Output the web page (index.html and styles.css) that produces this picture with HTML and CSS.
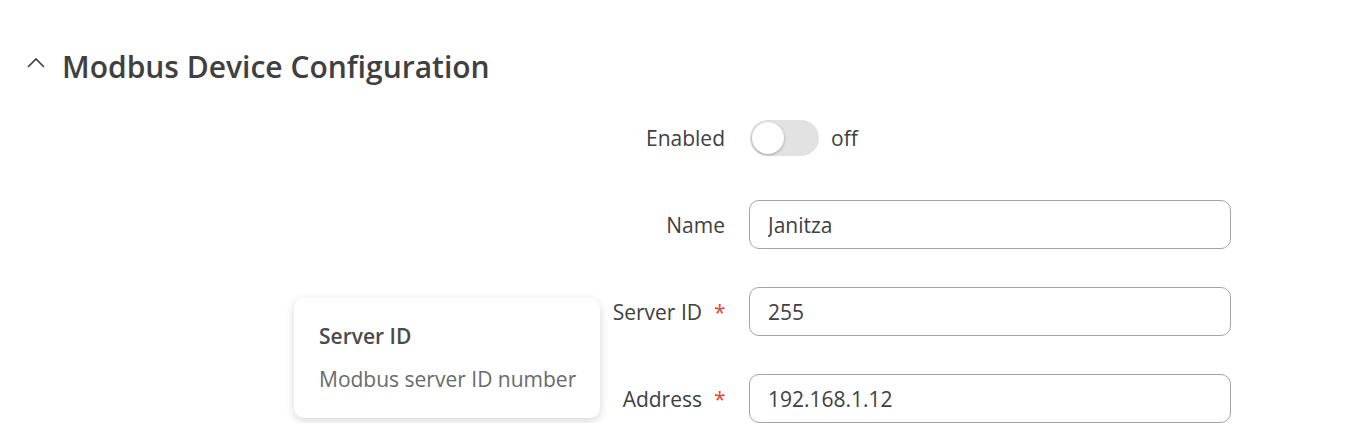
FILE: index.html
```html
<!DOCTYPE html>
<html lang="en">
<head>
    <meta charset="UTF-8">
    <meta name="viewport" content="width=device-width, initial-scale=1.0">
    <title>Modbus Device Configuration</title>
    <link rel="stylesheet" href="styles.css">
</head>
<body>
    <div class="section">
        <div class="section-header">
            <svg class="chevron" width="20" height="12" viewBox="0 0 20 12">
                <path d="M2 10 L10 2 L18 10" fill="none" stroke="#404040" stroke-width="1.6"/>
            </svg>
            <h2>Modbus Device Configuration</h2>
        </div>
        <div class="form">
            <div class="label">Enabled</div>
            <div class="field">
                <span class="toggle"><span class="knob"></span></span>
                <span class="toggle-text">off</span>
            </div>

            <div class="label">Name</div>
            <div class="field"><input type="text" value="Janitza"></div>

            <div class="label">Server ID <span class="req">*</span></div>
            <div class="field"><input type="text" value="255"></div>

            <div class="label">Address <span class="req">*</span></div>
            <div class="field"><input type="text" value="192.168.1.12"></div>
        </div>
        <div class="tooltip">
            <div class="tooltip-title">Server ID</div>
            <div class="tooltip-text">Modbus server ID number</div>
        </div>
    </div>
</body>
</html>
```

FILE: styles.css
```css
body {
    margin: 0;
    font-family: "Open Sans", Arial, sans-serif;
    color: #404040;
    background: #fff;
}
.section {
    position: relative;
}
.section-header {
    display: flex;
    align-items: center;
    height: 66px;
    padding-top: 33px;
    padding-left: 26px;
}
.chevron {
    margin-right: 16px;
    margin-top: -6px;
}
.section-header h2 {
    margin: 0;
    font-size: 30px;
    font-weight: 600;
    color: #404040;
}
.form {
    display: grid;
    grid-template-columns: 725px 482px;
    grid-auto-rows: 49px;
    column-gap: 24px;
    row-gap: 38px;
    margin-top: 14px;
}
.label {
    display: flex;
    align-items: center;
    justify-content: flex-end;
    font-size: 21px;
    color: #404040;
}
.req {
    color: #e5452f;
    margin-left: 12px;
    width: 11px;
}
.field {
    display: flex;
    align-items: center;
}
.field input {
    width: 100%;
    height: 49px;
    box-sizing: border-box;
    border: 1px solid #a4a3ac;
    border-radius: 10px;
    padding: 0 18px;
    font-family: "Open Sans", Arial, sans-serif;
    font-size: 21px;
    color: #404040;
    outline: none;
}
.toggle {
    position: relative;
    width: 69px;
    height: 36px;
    border-radius: 18px;
    background: #e2e2e2;
    margin-left: 1px;
}
.knob {
    position: absolute;
    left: 2px;
    top: 2px;
    width: 32px;
    height: 32px;
    border-radius: 50%;
    background: #fff;
    box-shadow: 0 1px 3px rgba(0, 0, 0, 0.3);
}
.toggle-text {
    margin-left: 12px;
    font-size: 21px;
}
.tooltip {
    position: absolute;
    left: 294px;
    top: 298px;
    width: 306px;
    height: 120px;
    box-sizing: border-box;
    padding: 24px 0 24px 25px;
    background: #fff;
    border-radius: 10px;
    box-shadow: 0 3px 10px rgba(0, 0, 0, 0.16);
    white-space: nowrap;
}
.tooltip-title {
    font-size: 21px;
    font-weight: 600;
    color: #4a4a4a;
    line-height: 28px;
}
.tooltip-text {
    font-size: 21px;
    color: #6a6a6a;
    margin-top: 15px;
    line-height: 28px;
}
```
